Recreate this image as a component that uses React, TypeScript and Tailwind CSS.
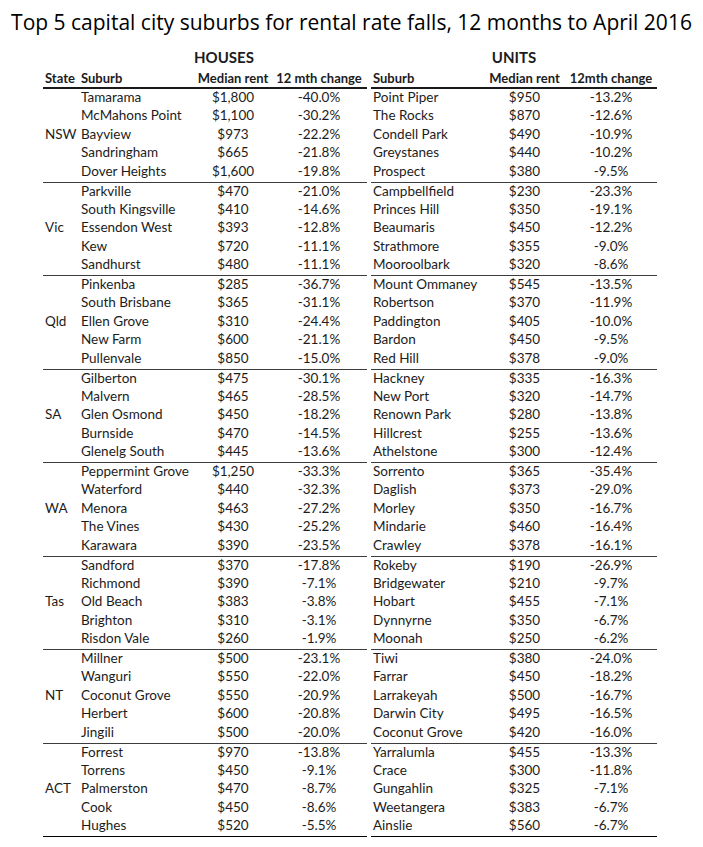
type Row = [string, string, string];

interface Group {
  state: string;
  houses: Row[];
  units: Row[];
}

const groups: Group[] = [
  {
    state: "NSW",
    houses: [
      ["Tamarama", "$1,800", "-40.0%"],
      ["McMahons Point", "$1,100", "-30.2%"],
      ["Bayview", "$973", "-22.2%"],
      ["Sandringham", "$665", "-21.8%"],
      ["Dover Heights", "$1,600", "-19.8%"],
    ],
    units: [
      ["Point Piper", "$950", "-13.2%"],
      ["The Rocks", "$870", "-12.6%"],
      ["Condell Park", "$490", "-10.9%"],
      ["Greystanes", "$440", "-10.2%"],
      ["Prospect", "$380", "-9.5%"],
    ],
  },
  {
    state: "Vic",
    houses: [
      ["Parkville", "$470", "-21.0%"],
      ["South Kingsville", "$410", "-14.6%"],
      ["Essendon West", "$393", "-12.8%"],
      ["Kew", "$720", "-11.1%"],
      ["Sandhurst", "$480", "-11.1%"],
    ],
    units: [
      ["Campbellfield", "$230", "-23.3%"],
      ["Princes Hill", "$350", "-19.1%"],
      ["Beaumaris", "$450", "-12.2%"],
      ["Strathmore", "$355", "-9.0%"],
      ["Mooroolbark", "$320", "-8.6%"],
    ],
  },
  {
    state: "Qld",
    houses: [
      ["Pinkenba", "$285", "-36.7%"],
      ["South Brisbane", "$365", "-31.1%"],
      ["Ellen Grove", "$310", "-24.4%"],
      ["New Farm", "$600", "-21.1%"],
      ["Pullenvale", "$850", "-15.0%"],
    ],
    units: [
      ["Mount Ommaney", "$545", "-13.5%"],
      ["Robertson", "$370", "-11.9%"],
      ["Paddington", "$405", "-10.0%"],
      ["Bardon", "$450", "-9.5%"],
      ["Red Hill", "$378", "-9.0%"],
    ],
  },
  {
    state: "SA",
    houses: [
      ["Gilberton", "$475", "-30.1%"],
      ["Malvern", "$465", "-28.5%"],
      ["Glen Osmond", "$450", "-18.2%"],
      ["Burnside", "$470", "-14.5%"],
      ["Glenelg South", "$445", "-13.6%"],
    ],
    units: [
      ["Hackney", "$335", "-16.3%"],
      ["New Port", "$320", "-14.7%"],
      ["Renown Park", "$280", "-13.8%"],
      ["Hillcrest", "$255", "-13.6%"],
      ["Athelstone", "$300", "-12.4%"],
    ],
  },
  {
    state: "WA",
    houses: [
      ["Peppermint Grove", "$1,250", "-33.3%"],
      ["Waterford", "$440", "-32.3%"],
      ["Menora", "$463", "-27.2%"],
      ["The Vines", "$430", "-25.2%"],
      ["Karawara", "$390", "-23.5%"],
    ],
    units: [
      ["Sorrento", "$365", "-35.4%"],
      ["Daglish", "$373", "-29.0%"],
      ["Morley", "$350", "-16.7%"],
      ["Mindarie", "$460", "-16.4%"],
      ["Crawley", "$378", "-16.1%"],
    ],
  },
  {
    state: "Tas",
    houses: [
      ["Sandford", "$370", "-17.8%"],
      ["Richmond", "$390", "-7.1%"],
      ["Old Beach", "$383", "-3.8%"],
      ["Brighton", "$310", "-3.1%"],
      ["Risdon Vale", "$260", "-1.9%"],
    ],
    units: [
      ["Rokeby", "$190", "-26.9%"],
      ["Bridgewater", "$210", "-9.7%"],
      ["Hobart", "$455", "-7.1%"],
      ["Dynnyrne", "$350", "-6.7%"],
      ["Moonah", "$250", "-6.2%"],
    ],
  },
  {
    state: "NT",
    houses: [
      ["Millner", "$500", "-23.1%"],
      ["Wanguri", "$550", "-22.0%"],
      ["Coconut Grove", "$550", "-20.9%"],
      ["Herbert", "$600", "-20.8%"],
      ["Jingili", "$500", "-20.0%"],
    ],
    units: [
      ["Tiwi", "$380", "-24.0%"],
      ["Farrar", "$450", "-18.2%"],
      ["Larrakeyah", "$500", "-16.7%"],
      ["Darwin City", "$495", "-16.5%"],
      ["Coconut Grove", "$420", "-16.0%"],
    ],
  },
  {
    state: "ACT",
    houses: [
      ["Forrest", "$970", "-13.8%"],
      ["Torrens", "$450", "-9.1%"],
      ["Palmerston", "$470", "-8.7%"],
      ["Cook", "$450", "-8.6%"],
      ["Hughes", "$520", "-5.5%"],
    ],
    units: [
      ["Yarralumla", "$455", "-13.3%"],
      ["Crace", "$300", "-11.8%"],
      ["Gungahlin", "$325", "-7.1%"],
      ["Weetangera", "$383", "-6.7%"],
      ["Ainslie", "$560", "-6.7%"],
    ],
  },
];

export default function App() {
  return (
    <div className="w-[703px] h-[847px] bg-white text-[#1c1c1c] font-['Lato',sans-serif]">
      <h1 className="pt-[8px] text-center text-[21px] leading-[28px] font-['Open_Sans',sans-serif] text-black">
        Top 5 capital city suburbs for rental rate falls, 12 months to April 2016
      </h1>

      <div className="ml-[43px] mt-[12px]">
        {/* section titles */}
        <div className="flex gap-[4px] h-[21px] text-[15px] leading-[18px] font-bold">
          <div className="w-[324px] pl-[38px] text-center">HOUSES</div>
          <div className="w-[286px] text-center">UNITS</div>
        </div>

        {/* column headers */}
        <div className="flex gap-[4px] text-[13px] leading-[18px] font-bold">
          <div className="w-[324px] grid grid-cols-[38px_114px_76px_96px] border-b-2 border-[#1a1a1a]">
            <span className="pl-[2px]">State</span>
            <span>Suburb</span>
            <span className="text-center whitespace-nowrap">Median rent</span>
            <span className="text-center whitespace-nowrap">12 mth change</span>
          </div>
          <div className="w-[286px] grid grid-cols-[116px_75px_95px] border-b-2 border-[#1a1a1a]">
            <span className="pl-[2px]">Suburb</span>
            <span className="text-center whitespace-nowrap">Median rent</span>
            <span className="text-center whitespace-nowrap pl-[3px]">12mth change</span>
          </div>
        </div>

        {groups.map((g, gi) => (
          <div key={g.state} className="flex gap-[4px] text-[13.5px] leading-[16px]">
            <div
              className={`w-[324px] h-[93.5px] border-b-[1.5px] ${
                gi === groups.length - 1 ? "border-black" : "border-[#3c3c3c]"
              }`}
            >
              {g.houses.map((r, i) => (
                <div key={r[0]} className="grid grid-cols-[38px_114px_76px_96px] h-[18.4px]">
                  <span className="pl-[2px]">{i === 2 ? g.state : ""}</span>
                  <span className="whitespace-nowrap">{r[0]}</span>
                  <span className="text-center">{r[1]}</span>
                  <span className="text-center">{r[2]}</span>
                </div>
              ))}
            </div>
            <div
              className={`w-[286px] h-[93.5px] border-b-[1.5px] ${
                gi === groups.length - 1 ? "border-black" : "border-[#3c3c3c]"
              }`}
            >
              {g.units.map((r) => (
                <div key={r[0]} className="grid grid-cols-[116px_75px_95px] h-[18.4px]">
                  <span className="pl-[2px] whitespace-nowrap">{r[0]}</span>
                  <span className="text-center">{r[1]}</span>
                  <span className="text-center pl-[3px]">{r[2]}</span>
                </div>
              ))}
            </div>
          </div>
        ))}
      </div>
    </div>
  );
}
